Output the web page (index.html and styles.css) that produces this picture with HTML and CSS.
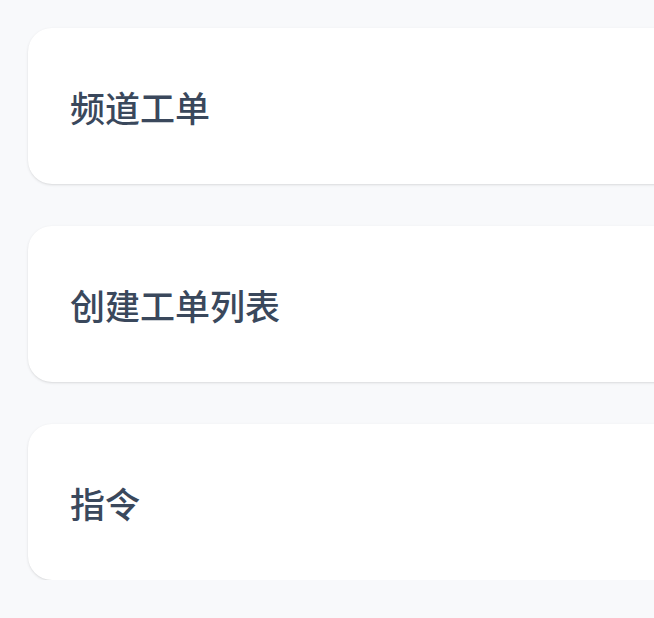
FILE: index.html
```html
<!DOCTYPE html>
<html lang="zh">
<head>
<meta charset="utf-8">
<link rel="stylesheet" href="styles.css">
</head>
<body>
<div class="list">
  <div class="card"><span class="title">频道工单</span></div>
  <div class="card"><span class="title">创建工单列表</span></div>
  <div class="card"><span class="title">指令</span></div>
</div>
</body>
</html>
```
FILE: styles.css
```css
html, body {
  margin: 0;
  padding: 0;
  overflow: hidden;
  background: #f8f9fb;
}
body {
  font-family: "Noto Sans CJK SC", "Noto Sans", sans-serif;
}
.list {
  display: flex;
  flex-direction: column;
  gap: 42px;
  padding: 28px 0 0 28px;
  width: 720px;
}
.card {
  height: 156px;
  box-sizing: border-box;
  background: #ffffff;
  border-radius: 24px;
  box-shadow: 0 1px 3px 0 rgba(0,0,0,0.1), 0 1px 2px -1px rgba(0,0,0,0.1);
  display: flex;
  align-items: center;
  padding-left: 42px;
}
.title {
  font-size: 35px;
  font-weight: 500;
  color: #3a485c;
  line-height: 1;
}
```
